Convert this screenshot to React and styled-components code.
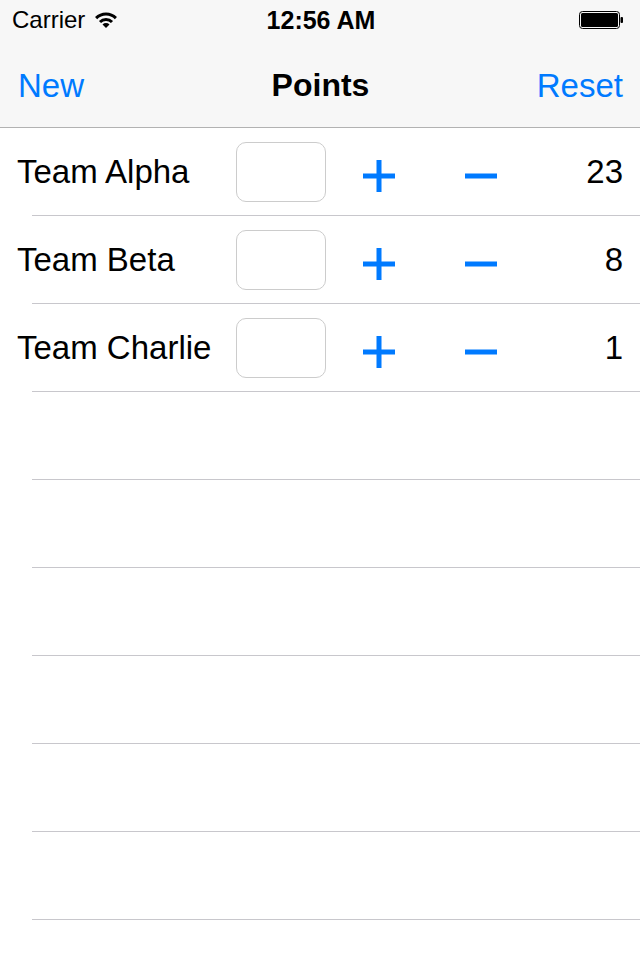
import React from "react";
import styled, { createGlobalStyle } from "styled-components";

const GlobalStyle = createGlobalStyle`
  body {
    margin: 0;
    font-family: "Liberation Sans", Arial, sans-serif;
    background: #ffffff;
    color: #000000;
  }
`;

const Screen = styled.div`
  width: 640px;
  height: 960px;
  overflow: hidden;
  background: #ffffff;
`;

const Header = styled.header`
  background: #f7f7f7;
  border-bottom: 1px solid #b2b2b2;
`;

const StatusBar = styled.div`
  height: 40px;
  display: grid;
  grid-template-columns: 1fr auto 1fr;
  align-items: center;
  padding: 0 16px 0 12px;
  font-size: 24px;
`;

const Carrier = styled.div`
  display: flex;
  align-items: center;
  gap: 10px;
`;

const Time = styled.div`
  font-weight: 700;
  font-size: 25px;
  margin-left: 6px;
`;

const Battery = styled.div`
  justify-self: end;
  display: flex;
  align-items: center;
`;

const NavBar = styled.nav`
  height: 87px;
  box-sizing: border-box;
  padding: 4px 17px 0 18px;
  display: grid;
  grid-template-columns: 1fr auto 1fr;
  align-items: center;
  font-size: 34px;
`;

const NavButton = styled.button`
  justify-self: ${(p) => (p.$right ? "end" : "start")};
  padding: 0;
  border: none;
  background: none;
  font: inherit;
  font-size: 33px;
  color: #007aff;
  cursor: pointer;
`;

const Title = styled.h1`
  margin: 0;
  font-size: 32px;
  font-weight: 700;
`;

const List = styled.div``;

const RowContent = styled.div`
  height: 87px;
  display: flex;
  align-items: center;
  padding: 0 17px;
`;

const Separator = styled.div`
  height: 1px;
  margin-left: 32px;
  background: #c8c7cc;
`;

const Name = styled.div`
  width: 219px;
  flex-shrink: 0;
  font-size: 33px;
  white-space: nowrap;
`;

const Entry = styled.input`
  width: 90px;
  height: 60px;
  box-sizing: border-box;
  border: 1px solid #cccccc;
  border-radius: 10px;
  background: #ffffff;
  outline: none;
  font: inherit;
  font-size: 28px;
  text-align: center;
`;

const IconButton = styled.button`
  display: flex;
  padding: 0;
  margin-top: 9px;
  margin-left: ${(p) => p.$gap}px;
  border: none;
  background: none;
  cursor: pointer;
`;

const Score = styled.div`
  flex: 1;
  text-align: right;
  font-size: 33px;
`;

const teams = [
  { name: "Team Alpha", score: 23 },
  { name: "Team Beta", score: 8 },
  { name: "Team Charlie", score: 1 },
];

function Wifi() {
  return (
    <svg width="22" height="17" viewBox="0 0 22 17">
      <path d="M1.1 6.1 A14 14 0 0 1 20.9 6.1" fill="none" stroke="#000" strokeWidth="3" />
      <path d="M4.99 9.99 A8.5 8.5 0 0 1 17.01 9.99" fill="none" stroke="#000" strokeWidth="3" />
      <path d="M11 16 L7.5 12.5 A5 5 0 0 1 14.5 12.5 Z" fill="#000" />
    </svg>
  );
}

function BatteryIcon() {
  return (
    <svg width="45" height="18" viewBox="0 0 45 18">
      <rect x="0.5" y="0.5" width="40" height="17" rx="3" fill="none" stroke="#000" />
      <rect x="2" y="2" width="37" height="14" rx="1.5" fill="#000" />
      <rect x="41.5" y="6" width="2.5" height="6" rx="1" fill="#000" />
    </svg>
  );
}

function Plus() {
  return (
    <svg width="32" height="32" viewBox="0 0 32 32">
      <rect x="0" y="13.5" width="32" height="5" fill="#007aff" />
      <rect x="13.5" y="0" width="5" height="32" fill="#007aff" />
    </svg>
  );
}

function Minus() {
  return (
    <svg width="32" height="32" viewBox="0 0 32 32">
      <rect x="0" y="13.5" width="32" height="5" fill="#007aff" />
    </svg>
  );
}

function App() {
  const empty = Array.from({ length: 7 });
  return (
    <Screen>
      <GlobalStyle />
      <Header>
        <StatusBar>
          <Carrier>
            Carrier <Wifi />
          </Carrier>
          <Time>12:56 AM</Time>
          <Battery>
            <BatteryIcon />
          </Battery>
        </StatusBar>
        <NavBar>
          <NavButton>New</NavButton>
          <Title>Points</Title>
          <NavButton $right>Reset</NavButton>
        </NavBar>
      </Header>
      <List>
        {teams.map((t) => (
          <div key={t.name}>
            <RowContent>
              <Name>{t.name}</Name>
              <Entry type="text" />
              <IconButton $gap={37}>
                <Plus />
              </IconButton>
              <IconButton $gap={70}>
                <Minus />
              </IconButton>
              <Score>{t.score}</Score>
            </RowContent>
            <Separator />
          </div>
        ))}
        {empty.map((_, i) => (
          <div key={i}>
            <RowContent />
            <Separator />
          </div>
        ))}
      </List>
    </Screen>
  );
}

export default App;
